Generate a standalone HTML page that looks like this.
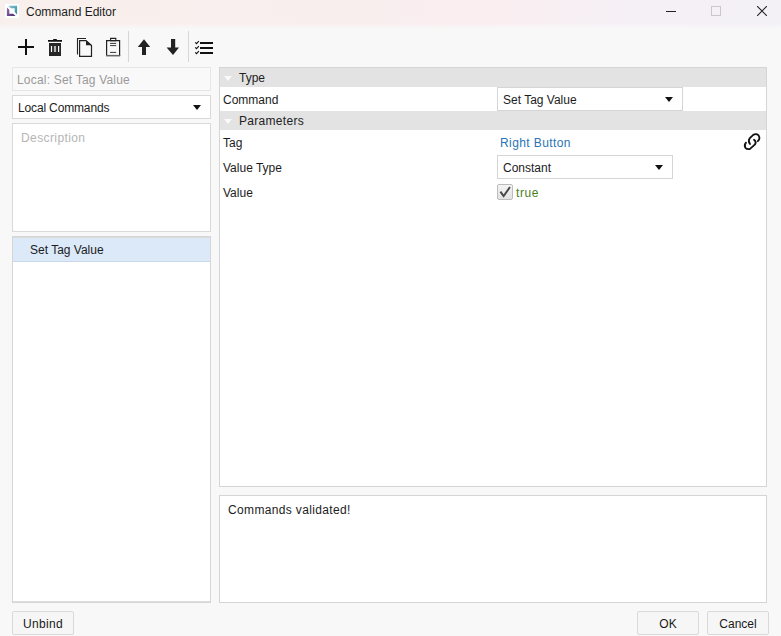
<!DOCTYPE html>
<html><head><meta charset="utf-8">
<style>
*{box-sizing:border-box;margin:0;padding:0}
html,body{width:781px;height:636px;overflow:hidden}
body{background:#f8f8f8;font-family:"Liberation Sans",sans-serif;font-size:12px;color:#1a1a1a;position:relative}
.abs{position:absolute}
#title{left:0;top:0;width:781px;height:28px;background:linear-gradient(90deg,#f8f0ec 0%,#f9eeee 45%,#faeef1 65%,#f5f0f6 80%,#f3f0f6 100%)}
#titlefade{left:0;top:23px;width:781px;height:6px;background:linear-gradient(180deg,rgba(248,248,248,0) 0%,#f8f8f8 100%)}
.t{position:absolute;white-space:nowrap;line-height:16px}
.box{position:absolute;background:#fff;border:1px solid #d9d9d9}
.hdr{position:absolute;background:#e3e3e3}
.tri{position:absolute;width:0;height:0;border-left:4px solid transparent;border-right:4px solid transparent;border-top:5px solid #fafafa}
.dd{position:absolute;width:0;height:0;border-left:4px solid transparent;border-right:4px solid transparent;border-top:5px solid #111}
.btn{position:absolute;background:#f6f6f6;border:1px solid #d9d9d9;border-radius:2px;text-align:center;line-height:24px;color:#1a1a1a}
.sep{position:absolute;width:1px;background:#dcdcdc}
</style></head><body>
<div id="title" class="abs"></div>
<div id="titlefade" class="abs"></div>
<!-- app icon -->
<svg class="abs" style="left:0;top:0" width="24" height="24" viewBox="0 0 24 24">
<rect x="4.5" y="3.5" width="15" height="15" fill="#fefefe" stroke="#eee" stroke-width="0.6"/>
<defs><linearGradient id="tg" x1="0" y1="0" x2="1" y2="1"><stop offset="0" stop-color="#86c6d2"/><stop offset="1" stop-color="#34899a"/></linearGradient>
<linearGradient id="pg" x1="0" y1="0" x2="1" y2="1"><stop offset="0" stop-color="#9272b4"/><stop offset="1" stop-color="#4a2a70"/></linearGradient></defs>
<path d="M8.4 5.8 H17.1 V14.5 L14.7 12.1 V8.2 H10.8 Z" fill="url(#tg)"/>
<path d="M6.9 7.4 L9.3 9.8 V13.7 H13.2 L15.6 16.1 H6.9 Z" fill="url(#pg)"/>
</svg>
<div class="t" style="left:26px;top:4px;font-size:12px;color:#1c1c1c">Command Editor</div>
<!-- window controls -->
<div class="abs" style="left:666px;top:11px;width:10px;height:1px;background:#222"></div>
<div class="abs" style="left:711px;top:6px;width:10px;height:10px;border:1px solid #c8c8c8"></div>
<svg class="abs" style="left:757px;top:6px" width="10" height="10" viewBox="0 0 10 10"><path d="M0 0 L10 10 M10 0 L0 10" stroke="#222" stroke-width="1.1"/></svg>

<!-- toolbar -->
<svg class="abs" style="left:0;top:30px" width="220" height="32" viewBox="0 30 220 32">
<path d="M18 47 H34 M26 39 V55" stroke="#111" stroke-width="2"/>
<path d="M48 40 H62 V41.8 H48 Z M53.2 39 H56.8 V40 H53.2 Z" fill="#111"/>
<path d="M49 43 H61 V56 H49 Z" fill="#262626"/>
<path d="M51.5 46 V52 M58.6 46 V52" stroke="#fafafa" stroke-width="1.2"/>
<path d="M55 46 V52" stroke="#b4b4b4" stroke-width="2.2"/>
<path d="M77.5 54.5 V38.5 H86" fill="none" stroke="#222" stroke-width="1.1"/>
<path d="M79.6 40.6 H86 L91.5 45.5 V56.4 H79.6 Z" fill="#f8f8f8" stroke="#222" stroke-width="1.2"/>
<path d="M86 40.3 L92 45.2 H86 Z" fill="#222"/>
<path d="M106.6 40.6 H119.6 V55.6 H106.6 Z" fill="#f8f8f8" stroke="#222" stroke-width="1.2"/>
<path d="M106 55.5 H120.2" stroke="#666" stroke-width="1.2"/>
<path d="M110.6 38.4 H115.8 V40.6 H110.6 Z" fill="#fff" stroke="#222" stroke-width="1.1"/>
<path d="M110 43.4 H116.2 M110 45.6 H116.2 M110 52.4 H116.2" stroke="#222" stroke-width="0.9"/>
<path d="M128.5 31 V62 M188.5 31 V62" stroke="#d6d6d6" stroke-width="1"/>
<path d="M144 39.2 L150.2 47 H146 V55 H142 V47 H137.8 Z" fill="#222"/>
<path d="M173 55 L179 47.4 H175.2 V39 H171 V47.4 H166.6 Z" fill="#222"/>
<path d="M195.2 42.4 L196.5 43.6 L198.9 41.2 M195.2 47.4 L196.5 48.6 L198.9 46.2 M195.2 52.4 L196.5 53.6 L198.9 51.2" fill="none" stroke="#111" stroke-width="1.15"/>
<path d="M200 43 H213 M200 48 H213 M200 53 H213" stroke="#111" stroke-width="2"/>
</svg>

<!-- left panel -->
<div class="box" style="left:12px;top:67px;width:199px;height:24px;background:#f9f9f9;border-color:#e6e6e6"></div>
<div class="t" style="left:17px;top:72px;color:#9a9a9a;letter-spacing:0.2px">Local: Set Tag Value</div>
<div class="box" style="left:12px;top:95px;width:199px;height:24px"></div>
<div class="t" style="left:18px;top:100px;color:#1c1c1c;letter-spacing:-0.15px">Local Commands</div>
<div class="dd" style="left:193px;top:105px"></div>
<div class="box" style="left:12px;top:123px;width:199px;height:109px"></div>
<div class="t" style="left:21px;top:130px;color:#b5b5b5;letter-spacing:0.4px">Description</div>
<div class="box" style="left:12px;top:236px;width:199px;height:367px;border-color:#d6d6d6"></div>
<div class="abs" style="left:13px;top:601px;width:197px;height:1px;background:#dedede"></div>
<div class="abs" style="left:13px;top:237px;width:197px;height:1px;background:#dadada"></div>
<div class="abs" style="left:13px;top:238px;width:197px;height:24px;background:#dbe9f9;border-bottom:1px solid #cad9ea"></div>
<div class="t" style="left:30px;top:242px;color:#1c1c1c">Set Tag Value</div>

<!-- property grid -->
<div class="box" style="left:219px;top:67px;width:548px;height:420px;border-color:#d5d5d5"></div>
<div class="hdr" style="left:220px;top:68px;width:546px;height:19px"></div>
<div class="tri" style="left:224px;top:76px"></div>
<div class="t" style="left:239px;top:70px;color:#222">Type</div>
<div class="t" style="left:223px;top:92px;color:#1c1c1c">Command</div>
<div class="box" style="left:497px;top:87px;width:186px;height:24px;border-color:#d5d5d5"></div>
<div class="t" style="left:503px;top:92px;color:#1c1c1c">Set Tag Value</div>
<div class="dd" style="left:665px;top:97px"></div>
<div class="hdr" style="left:220px;top:111px;width:546px;height:19px"></div>
<div class="tri" style="left:224px;top:119px"></div>
<div class="t" style="left:239px;top:113px;color:#222;letter-spacing:0.3px">Parameters</div>
<div class="t" style="left:223px;top:135px;color:#1c1c1c">Tag</div>
<div class="t" style="left:500px;top:135px;color:#2a74b4;letter-spacing:0.4px">Right Button</div>
<svg class="abs" style="left:738px;top:128px" width="28" height="28" viewBox="738 128 28 28">
<path d="M750 144 Q747.8 141 749.6 138.4 L753.2 134.9 Q756.2 133.2 758.6 135.4 Q760.6 138.2 757.8 141.2" fill="none" stroke="#111" stroke-width="1.8" stroke-linecap="round"/>
<path d="M746 142.6 Q743.8 145.2 745.4 147.8 Q747.8 150.2 750.6 148.4 L755 144.4 Q756.8 141.6 754 139.7" fill="none" stroke="#111" stroke-width="1.8" stroke-linecap="round"/>
</svg>
<div class="t" style="left:223px;top:160px;color:#1c1c1c">Value Type</div>
<div class="box" style="left:497px;top:155px;width:176px;height:24px;border-color:#d5d5d5"></div>
<div class="t" style="left:503px;top:160px;color:#1c1c1c">Constant</div>
<div class="dd" style="left:655px;top:165px"></div>
<div class="t" style="left:223px;top:185px;color:#1c1c1c">Value</div>
<div class="abs" style="left:497px;top:184px;width:16px;height:16px;background:linear-gradient(#f4f4f4,#e2e2e2);border:1px solid #bcbcbc;border-radius:2px"></div>
<svg class="abs" style="left:494px;top:181px" width="20" height="20" viewBox="494 181 20 20"><path d="M500.4 191.6 L503.6 196 L510 187" fill="none" stroke="#474747" stroke-width="1.9"/></svg>
<div class="t" style="left:516px;top:185px;color:#4b7f1c;letter-spacing:0.55px">true</div>

<!-- output -->
<div class="box" style="left:219px;top:495px;width:548px;height:108px;border-color:#d5d5d5"></div>
<div class="t" style="left:228px;top:502px;color:#1c1c1c;letter-spacing:0.35px">Commands validated!</div>

<!-- buttons -->
<div class="btn" style="left:12px;top:611px;width:62px;height:24px;letter-spacing:0.3px">Unbind</div>
<div class="btn" style="left:637px;top:611px;width:62px;height:24px">OK</div>
<div class="btn" style="left:707px;top:611px;width:62px;height:24px">Cancel</div>
</body></html>
